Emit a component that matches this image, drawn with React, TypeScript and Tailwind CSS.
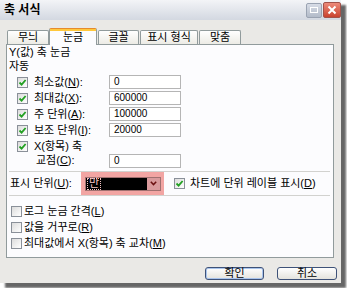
import React from 'react';

const FONT = "font-['Liberation_Sans','Noto_Sans_CJK_KR',sans-serif]";

const Check: React.FC<{ checked?: boolean }> = ({ checked = false }) => (
  <span className="flex h-[11px] w-[11px] shrink-0 items-center justify-center border border-[#8a9099] bg-gradient-to-br from-[#dcdcdc] to-white">
    {checked && (
      <svg width="9" height="9" viewBox="0 0 9 9">
        <path d="M1.5 4.5 L3.6 6.6 L7.6 2" fill="none" stroke="#22a022" strokeWidth="1.8" />
      </svg>
    )}
  </span>
);

const Field: React.FC<{ value: string }> = ({ value }) => (
  <div className="flex h-[14px] w-[72px] items-center border border-[#b5b5b5] bg-white pl-[4px] text-[10px] leading-none">
    {value}
  </div>
);

const Row: React.FC<{ label: React.ReactNode; value: string }> = ({ label, value }) => (
  <div className="flex h-[16px] items-center pl-[8px]">
    <Check checked />
    <span className="ml-[6px] w-[75px] leading-none">{label}</span>
    <Field value={value} />
  </div>
);

const Tab: React.FC<{ label: string; w: string; active?: boolean }> = ({ label, w, active }) =>
  active ? (
    <div className={`relative z-10 -mb-px flex h-[17px] items-center justify-center rounded-t-[2px] border border-b-0 border-[#919b9c] border-t-[#e68b2c] bg-[#fcfcfe] leading-none ${w}`}>
      <span className="absolute left-0 right-0 top-0 h-[2px] bg-[#ffc83c]" />
      {label}
    </div>
  ) : (
    <div className={`mt-[3px] flex h-[14px] items-center justify-center rounded-t-[2px] border border-b-0 border-[#919b9c] bg-gradient-to-b from-white to-[#ecebe5] leading-none ${w}`}>
      {label}
    </div>
  );

export default function App() {
  return (
    <div className={`h-[288px] w-[347px] overflow-hidden bg-white text-[11px] text-black ${FONT}`}>
      <div className="flex h-[283px] w-[341px] flex-col bg-[#eae9e6] shadow-[5px_5px_2px_rgba(0,0,0,0.6)]">
        {/* title bar */}
        <div className="flex h-[20px] items-center bg-gradient-to-b from-[#f3f4f7] to-[#d3d8e1] pl-[4px]">
          <span className="text-[12px] font-bold leading-none">축 서식</span>
          <div className="ml-auto flex items-center gap-[1px]">
            <div className="flex h-[15px] w-[16px] items-center justify-center rounded-[2px] border border-[#9aa3b2] bg-gradient-to-b from-[#d7dce6] to-[#b3bbc9]">
              <span className="h-[6px] w-[8px] border border-white" />
            </div>
            <div className="flex h-[16px] w-[18px] items-center justify-center rounded-[2px] border border-[#a2524a] bg-gradient-to-b from-[#ec8a7a] to-[#c9412e]">
              <svg width="10" height="10" viewBox="0 0 10 10">
                <path d="M1.5 1.5 L8.5 8.5 M8.5 1.5 L1.5 8.5" stroke="white" strokeWidth="2" />
              </svg>
            </div>
          </div>
        </div>

        {/* tabs */}
        <div className="mt-[7px] flex items-end pl-[7px]">
          <Tab label="무늬" w="w-[42px]" />
          <Tab label="눈금" w="w-[48px]" active />
          <Tab label="글꼴" w="ml-[1px] w-[41px]" />
          <Tab label="표시 형식" w="ml-[1px] w-[58px]" />
          <Tab label="맞춤" w="ml-[1px] w-[42px]" />
        </div>

        {/* panel */}
        <div className="ml-[6px] h-[214px] w-[328px] border border-[#919b9c] bg-[#fcfcfe] pl-[2px] pr-[3px]">
          <div className="flex h-[14px] items-center leading-none">Y(값) 축 눈금</div>
          <div className="flex h-[14px] items-center leading-none">자동</div>
          <div className="mt-[1px]">
            <Row label={<>최소값(<u>N</u>):</>} value="0" />
            <Row label={<>최대값(<u>X</u>):</>} value="600000" />
            <Row label={<>주 단위(<u>A</u>):</>} value="100000" />
            <Row label={<>보조 단위(<u>I</u>):</>} value="20000" />
            <div className="flex h-[16px] items-center pl-[8px]">
              <Check checked />
              <span className="ml-[6px] leading-none">X(항목) 축</span>
            </div>
            <div className="flex h-[13px] items-center pl-[27px]">
              <span className="w-[73px] leading-none">교점(<u>C</u>):</span>
              <Field value="0" />
            </div>
          </div>

          <div className="mt-[4px] h-px bg-[#d2d2cf]" />

          <div className="flex h-[23px] items-center">
            <span className="ml-[1px] w-[71px] leading-none">표시 단위(<u>U</u>):</span>
            <div className="flex h-[23px] w-[83px] items-center bg-[#f2a5a3] pl-[4px]">
              <div className="flex h-[14px] w-[76px] items-center border border-[#a07070] bg-black">
                <span className="ml-[1px] flex h-[12px] items-center border border-dotted border-[#f0c0c0] px-[1px] leading-none text-[#f6c8c8]">만</span>
                <div className="ml-auto flex h-[12px] w-[13px] items-center justify-center bg-[#d99a9c]">
                  <svg width="7" height="5" viewBox="0 0 7 5">
                    <path d="M0.8 0.8 L3.5 3.6 L6.2 0.8" fill="none" stroke="#6b1010" strokeWidth="1.5" />
                  </svg>
                </div>
              </div>
            </div>
            <div className="ml-[10px] flex items-center">
              <Check checked />
              <span className="ml-[5px] leading-none">차트에 단위 레이블 표시(<u>D</u>)</span>
            </div>
          </div>

          <div className="h-px bg-[#d2d2cf]" />

          <div className="mt-[7px] pl-[2px]">
            <div className="flex h-[16px] items-center">
              <Check />
              <span className="ml-[2px] leading-none">로그 눈금 간격(<u>L</u>)</span>
            </div>
            <div className="flex h-[16px] items-center">
              <Check />
              <span className="ml-[2px] leading-none">값을 거꾸로(<u>R</u>)</span>
            </div>
            <div className="flex h-[16px] items-center">
              <Check />
              <span className="ml-[2px] leading-none">최대값에서 X(항목) 축 교차(<u>M</u>)</span>
            </div>
          </div>
        </div>

        {/* buttons */}
        <div className="mt-[9px] flex justify-end gap-[13px] pr-[4px]">
          <button className="flex h-[13px] w-[59px] items-center justify-center rounded-[3px] border border-[#3e5278] bg-gradient-to-b from-white to-[#e4e3dd] leading-none shadow-[inset_0_0_0_1px_#a9c4ec]">
            확인
          </button>
          <button className="flex h-[13px] w-[60px] items-center justify-center rounded-[3px] border border-[#3e5278] bg-gradient-to-b from-white to-[#e4e3dd] leading-none">
            취소
          </button>
        </div>
      </div>
    </div>
  );
}
